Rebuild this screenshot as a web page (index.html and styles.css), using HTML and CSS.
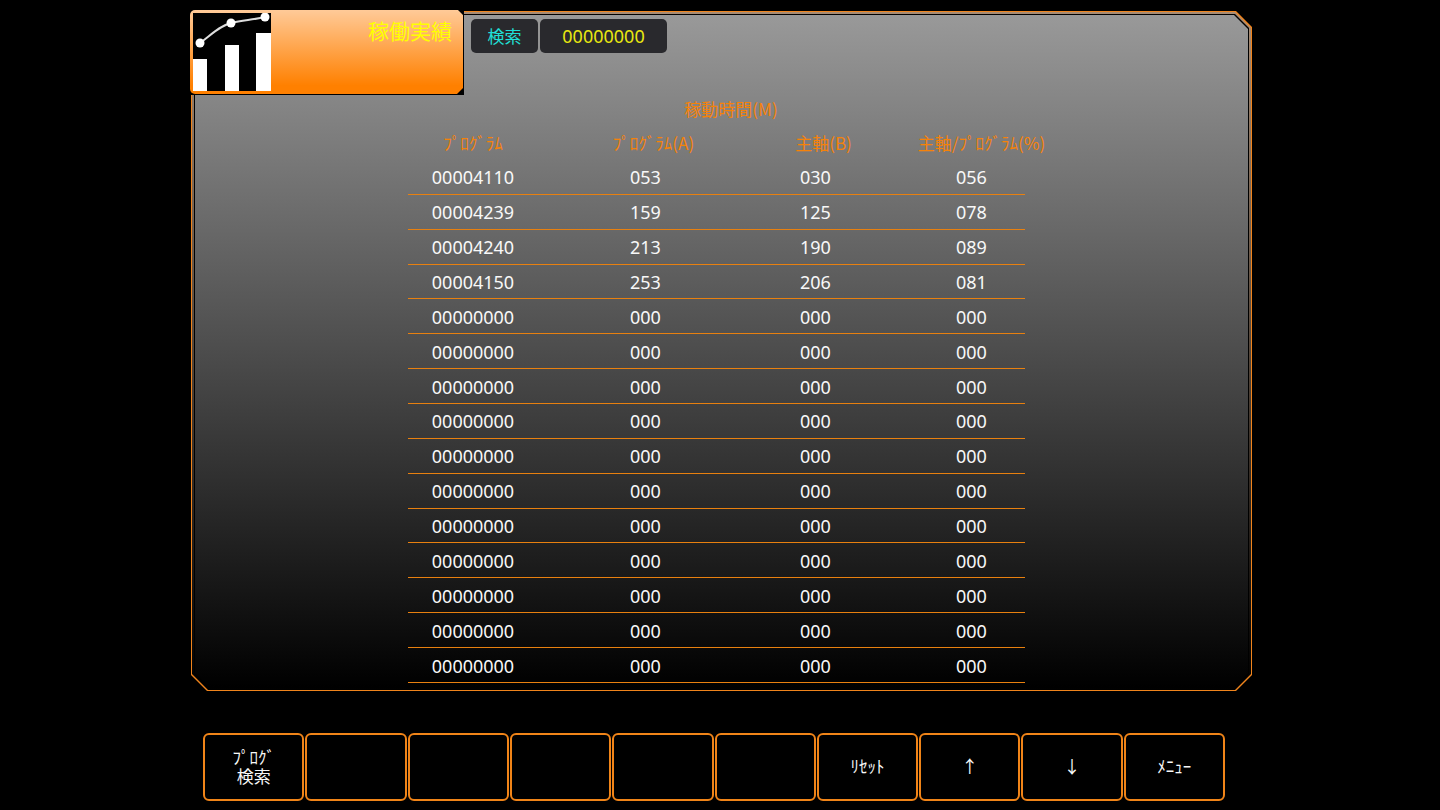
FILE: index.html
```html
<!DOCTYPE html>
<html lang="ja">
<head>
<meta charset="UTF-8">
<meta name="viewport" content="width=device-width, initial-scale=1">
<title>稼働実績</title>
<link rel="stylesheet" href="styles.css">
</head>
<body>
<main class="panel">
  <header class="panel-head">
    <div class="tab-box">
      <div class="tab">
        <svg class="tab-icon" viewBox="0 0 78 78" aria-hidden="true">
          <rect width="78" height="78" fill="#000"/>
          <path d="M0 46h14v32H0zM32 32h14v46H32zM63 20h15v58H63z" fill="#fff"/>
          <path d="M7 30C18 22 26 13 38 10C50 7 60 7 72 4" fill="none" stroke="#ddd" stroke-width="2"/>
          <circle cx="7" cy="30" r="4.5" fill="#fff"/>
          <circle cx="38" cy="10" r="4.5" fill="#fff"/>
          <circle cx="72" cy="4" r="4.5" fill="#fff"/>
        </svg>
        <h1 class="tab-title">稼働実績</h1>
      </div>
    </div>
    <div class="search">
      <label class="search-label" for="program-no">検索</label>
      <input class="search-input" id="program-no" type="text" value="00000000">
    </div>
  </header>

  <div class="table-wrap">
    <table class="results">
      <caption>稼動時間(M)</caption>
      <colgroup>
        <col class="col-program">
        <col class="col-a">
        <col class="col-b">
        <col class="col-rate">
        <col class="col-end">
      </colgroup>
      <thead>
        <tr><th>ﾌﾟﾛｸﾞﾗﾑ</th><th>ﾌﾟﾛｸﾞﾗﾑ(A)</th><th>主軸(B)</th><th colspan="2">主軸/ﾌﾟﾛｸﾞﾗﾑ(%)</th></tr>
      </thead>
      <tbody>
        <tr><td>00004110</td><td>053</td><td>030</td><td>056</td></tr>
        <tr><td>00004239</td><td>159</td><td>125</td><td>078</td></tr>
        <tr><td>00004240</td><td>213</td><td>190</td><td>089</td></tr>
        <tr><td>00004150</td><td>253</td><td>206</td><td>081</td></tr>
        <tr><td>00000000</td><td>000</td><td>000</td><td>000</td></tr>
        <tr><td>00000000</td><td>000</td><td>000</td><td>000</td></tr>
        <tr><td>00000000</td><td>000</td><td>000</td><td>000</td></tr>
        <tr><td>00000000</td><td>000</td><td>000</td><td>000</td></tr>
        <tr><td>00000000</td><td>000</td><td>000</td><td>000</td></tr>
        <tr><td>00000000</td><td>000</td><td>000</td><td>000</td></tr>
        <tr><td>00000000</td><td>000</td><td>000</td><td>000</td></tr>
        <tr><td>00000000</td><td>000</td><td>000</td><td>000</td></tr>
        <tr><td>00000000</td><td>000</td><td>000</td><td>000</td></tr>
        <tr><td>00000000</td><td>000</td><td>000</td><td>000</td></tr>
        <tr><td>00000000</td><td>000</td><td>000</td><td>000</td></tr>
      </tbody>
    </table>
  </div>
</main>

<nav class="keys">
  <button class="key" type="button">ﾌﾟﾛｸﾞ<br>検索</button>
  <button class="key" type="button"></button>
  <button class="key" type="button"></button>
  <button class="key" type="button"></button>
  <button class="key" type="button"></button>
  <button class="key" type="button"></button>
  <button class="key" type="button">ﾘｾｯﾄ</button>
  <button class="key" type="button">↑</button>
  <button class="key" type="button">↓</button>
  <button class="key" type="button">ﾒﾆｭｰ</button>
</nav>
</body>
</html>
```
FILE: styles.css
```css
* { box-sizing: border-box; }

body {
  margin: 0;
  min-height: 100vh;
  padding: 10px 0 9px 2px;
  display: flex;
  flex-direction: column;
  align-items: center;
  background: #000;
  color: #f8f8f8;
  font-family: "Noto Sans CJK JP", sans-serif;
  font-size: 17px;
}

/* frame, from back to front: orange edge, bevel, dark line, gradient face */
.panel {
  position: relative;
  isolation: isolate;
  flex: 1;
  display: flex;
  flex-direction: column;
  width: 100%;
  max-width: 1062px;
  padding-bottom: 9px;
}
.panel::before,
.panel::after,
.table-wrap::before,
.table-wrap::after {
  --cut: 16px;
  content: "";
  position: absolute;
  clip-path: polygon(0 0, calc(100% - var(--cut)) 0, 100% var(--cut), 100% calc(100% - var(--cut)), calc(100% - var(--cut)) 100%, var(--cut) 100%, 0 calc(100% - var(--cut)));
}
.panel::before {
  inset: 1px 0 1px 1px;
  z-index: -4;
  background: #f0841c;
}
.panel::after {
  inset: 2px 1px 2px 2px;
  z-index: -3;
  background: linear-gradient(#a88c74, #000);
}
.table-wrap::before {
  --cut: 14px;
  inset: 4px 3px 4px 4px;
  z-index: -2;
  background: #000;
}
.table-wrap::after {
  --cut: 14px;
  inset: 5px 4px 5px 5px;
  z-index: -1;
  background: linear-gradient(#999, #000);
}

.panel-head { display: flex; gap: 7px; }

.tab-box { width: 274px; padding: 0 1px 1px 0; background: #000; }
.tab {
  display: flex;
  justify-content: space-between;
  height: 84px;
  padding: 3px 11px 3px 3px;
  border-radius: 5px;
  background: linear-gradient(#ffca98, #ff8000 90%);
  clip-path: polygon(0 0, calc(100% - 5px) 0, 100% 5px, 100% calc(100% - 6px), calc(100% - 6px) 100%, 0 100%);
}
.tab-icon { width: 78px; height: 78px; }
.tab-title {
  margin: 3px 0 0;
  font-size: 21px;
  font-weight: 400;
  line-height: 28px;
  color: #ff0;
}

.search { display: flex; gap: 2px; height: 34px; margin-top: 9px; }
.search-label,
.search-input {
  border: 0;
  border-radius: 5px;
  background: #29292d;
  line-height: 34px;
  text-align: center;
}
.search-label { width: 67px; color: #20e0d8; }
.search-input {
  width: 127px;
  padding: 0;
  color: #e8e810;
  font-family: "Noto Sans", sans-serif;
  font-size: 18px;
}

.table-wrap { flex: 1; display: flex; justify-content: center; padding-left: 12px; }
.results {
  width: 637px;
  table-layout: fixed;
  border-collapse: separate;
  border-spacing: 0;
  text-align: center;
}
.results caption {
  height: 31px;
  padding-left: 8px;
  line-height: 28px;
  color: #f5820a;
}
.results th,
.results td { padding: 0; white-space: nowrap; }
.results th {
  height: 34px;
  line-height: 34px;
  font-weight: 400;
  color: #f5820a;
}
.results td {
  padding-top: 1px;
  border-bottom: 1px solid #e8800f;
  font-family: "Noto Sans", sans-serif;
  font-size: 18px;
  line-height: 32px;
}
.results th:first-child,
.results td:first-child { padding-right: 40px; }
.results th:nth-child(2),
.results th:nth-child(3) { padding-left: 16px; }

.col-program { width: 169px; }
.col-a { width: 136px; }
.col-b { width: 204px; }
.col-rate { width: 108px; }
.col-end { width: 20px; }

.keys {
  display: grid;
  grid-template-columns: repeat(10, 1fr);
  gap: 1px;
  width: 100%;
  max-width: 1062px;
  margin-top: 41px;
  padding: 0 27px 0 13px;
}
.key {
  height: 68px;
  padding: 0 0 3px;
  border: 2px solid #f08418;
  border-radius: 6px;
  background: #000;
  color: #f8f8f8;
  font: 17px/19px "Noto Sans CJK JP", sans-serif;
}
```
